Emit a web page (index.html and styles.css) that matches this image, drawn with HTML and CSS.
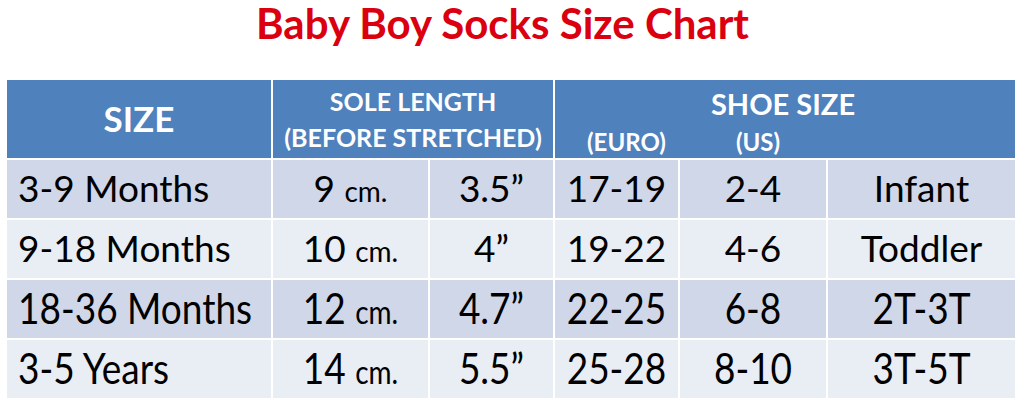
FILE: index.html
```html
<!DOCTYPE html>
<html lang="en">
<head>
    <meta charset="UTF-8">
    <meta name="viewport" content="width=device-width, initial-scale=1.0">
    <title>Baby Boy Socks Size Chart</title>
    <link rel="stylesheet" href="styles.css">
</head>
<body>
    <h1 class="title">Baby Boy Socks Size Chart</h1>

    <div class="chart">
        <div class="head size">SIZE</div>
        <div class="head sole">
            <span>SOLE LENGTH</span>
            <span>(BEFORE STRETCHED)</span>
        </div>
        <div class="head shoe">
            <span class="shoe-title">SHOE SIZE</span>
            <div class="shoe-sub">
                <span>(EURO)</span>
                <span>(US)</span>
            </div>
        </div>

        <div class="row dark">
            <div class="cell label"><span>3-9 Months</span></div>
            <div class="cell"><span>9 <small>cm.</small></span></div>
            <div class="cell"><span>3.5”</span></div>
            <div class="cell"><span>17-19</span></div>
            <div class="cell"><span>2-4</span></div>
            <div class="cell"><span>Infant</span></div>
        </div>
        <div class="row light">
            <div class="cell label"><span>9-18 Months</span></div>
            <div class="cell"><span>10 <small>cm.</small></span></div>
            <div class="cell"><span>4”</span></div>
            <div class="cell"><span>19-22</span></div>
            <div class="cell"><span>4-6</span></div>
            <div class="cell"><span>Toddler</span></div>
        </div>
        <div class="row dark tall">
            <div class="cell label"><span>18-36 Months</span></div>
            <div class="cell"><span>12 <small>cm.</small></span></div>
            <div class="cell"><span>4.7”</span></div>
            <div class="cell"><span>22-25</span></div>
            <div class="cell"><span>6-8</span></div>
            <div class="cell"><span>2T-3T</span></div>
        </div>
        <div class="row light tall">
            <div class="cell label"><span>3-5 Years</span></div>
            <div class="cell"><span>14 <small>cm.</small></span></div>
            <div class="cell"><span>5.5”</span></div>
            <div class="cell"><span>25-28</span></div>
            <div class="cell"><span>8-10</span></div>
            <div class="cell"><span>3T-5T</span></div>
        </div>
    </div>
</body>
</html>
```

FILE: styles.css
```css
body {
    margin: 0;
    background-color: white;
    font-family: Lato, "Open Sans", sans-serif;
}
.title {
    margin: 0;
    height: 80px;
    padding-right: 18px;
    font-size: 42px;
    font-weight: 700;
    line-height: 46px;
    text-align: center;
    color: #da0010;
}
.chart {
    display: grid;
    grid-template-columns: 264px 155px 123px 123px 146px 187px;
    grid-template-rows: 78px repeat(4, 58px);
    gap: 2px;
    margin-left: 7px;
    width: 1008px;
}
.head {
    background-color: #4f81bd;
    color: white;
    font-weight: 700;
    display: flex;
    flex-direction: column;
    align-items: center;
    justify-content: center;
}
.size {
    font-size: 35px;
    padding-bottom: 3px;
}
.sole {
    grid-column: span 2;
    font-size: 25px;
    line-height: 36px;
}
.shoe {
    grid-column: span 3;
    align-items: stretch;
    justify-content: flex-start;
}
.shoe-title {
    font-size: 29px;
    text-align: center;
    margin-top: 7px;
    line-height: 34px;
    padding-right: 4px;
}
.shoe-sub {
    display: flex;
    gap: 70px;
    margin-top: 6px;
    padding-left: 32px;
    font-size: 24px;
    line-height: 30px;
}
.row {
    grid-column: 1 / -1;
    display: grid;
    grid-template-columns: subgrid;
}
.row.dark > .cell {
    background-color: #d0d7e8;
}
.row.light > .cell {
    background-color: #e9edf4;
}
.cell {
    display: flex;
    align-items: center;
    justify-content: center;
    padding-bottom: 4px;
    font-size: 37px;
    color: black;
}
.cell.label {
    justify-content: flex-start;
    padding-left: 11px;
}
.cell small {
    font-size: 28px;
}
.row.tall .cell span {
    display: inline-block;
    transform: scaleY(1.15);
}
```
